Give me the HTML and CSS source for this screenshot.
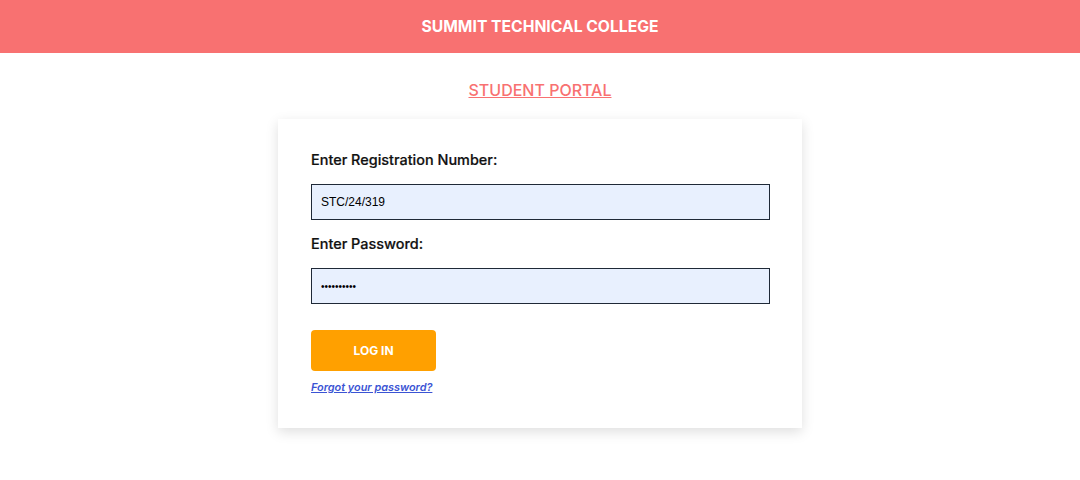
FILE: index.html
```html
<!DOCTYPE html>
<html>
<head>
<meta charset="utf-8">
<link rel="stylesheet" href="styles.css">
</head>
<body>
<header class="topbar">
  <h1 class="college">SUMMIT TECHNICAL COLLEGE</h1>
</header>
<main class="page">
  <h2 class="portal">STUDENT PORTAL</h2>
  <form class="card">
    <label class="label" for="reg">Enter Registration Number:</label>
    <input class="field" id="reg" type="text" value="STC/24/319">
    <label class="label" for="pw">Enter Password:</label>
    <input class="field pw" id="pw" type="password" value="password12">
    <button class="btn" type="button">LOG IN</button>
    <a class="forgot" href="#">Forgot your password?</a>
  </form>
</main>
</body>
</html>
```

FILE: styles.css
```css
* { box-sizing: border-box; }
html, body { margin: 0; padding: 0; background: #fff; }
body { font-family: Inter, "Noto Sans", sans-serif; color: #111; min-height: 480px; }
.topbar {
  background: #f87171;
  height: 53px;
  display: flex;
  align-items: center;
  justify-content: center;
}
.college {
  margin: 0;
  color: #fff;
  font-size: 15.7px;
  font-weight: 700;
}
.page {
  display: flex;
  flex-direction: column;
  align-items: center;
  padding-bottom: 40px;
}
.portal {
  margin: 27px 0 19px;
  font-size: 16px;
  font-weight: 500;
  line-height: 20px;
  color: #f87171;
  text-decoration: underline;
}
.card {
  width: 524px;
  padding: 32px 32px 34px 33px;
  background: #fff;
  box-shadow: 0 4px 12px rgba(0,0,0,0.13);
  display: flex;
  flex-direction: column;
}
.label {
  font-size: 14.45px;
  font-weight: 500;
  line-height: 18px;
  color: #111;
  margin-bottom: 15px;
  -webkit-text-stroke: 0.2px #111;
}
.field {
  height: 36px;
  width: 100%;
  border: 1px solid #1f2937;
  background: #e8f0fe;
  padding: 0 9px;
  font-family: "Liberation Sans", Arial, sans-serif;
  font-size: 12px;
  color: #000;
  margin-bottom: 15px;
}
.field.pw { font-size: 10px; letter-spacing: 0; }
.btn {
  margin-top: 11px;
  width: 125px;
  height: 41px;
  border: none;
  border-radius: 4px;
  background: #ffa000;
  color: #fff;
  font-family: Inter, sans-serif;
  font-weight: 700;
  font-size: 12px;
}
.forgot {
  margin-top: 9px;
  align-self: flex-start;
  font-size: 10.9px;
  font-style: italic;
  font-weight: 600;
  color: #3b54d4;
  text-decoration: underline;
}
```
